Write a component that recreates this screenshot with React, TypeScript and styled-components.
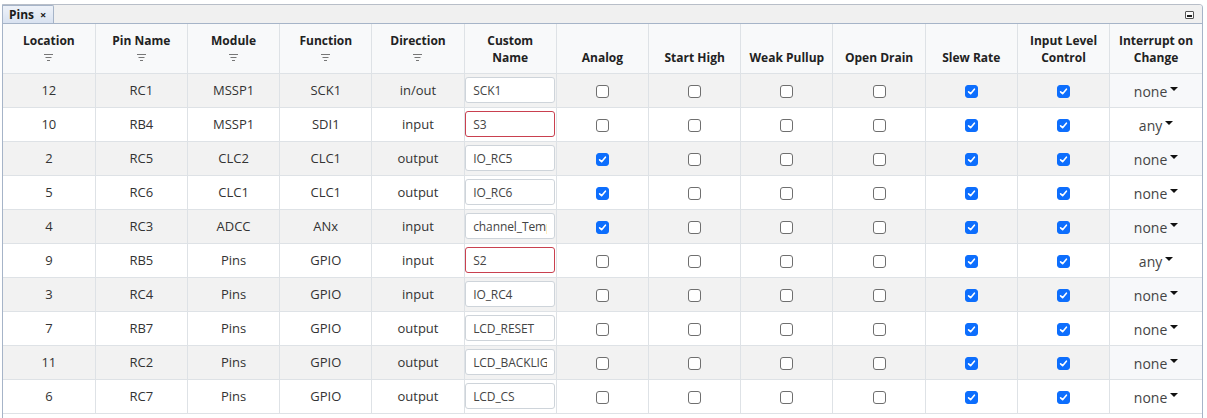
import React from "react";
import styled, { createGlobalStyle } from "styled-components";

const Global = createGlobalStyle`
  html, body { margin: 0; padding: 0; background: #ffffff; }
  body { font-family: "Open Sans", "Noto Sans", sans-serif; color: #333; }
`;

const Page = styled.div`
  padding: 4px 4px 0 2px;
`;

const Panel = styled.div`
  border: 1px solid #a6b4c8;
  border-bottom: none;
  border-top-right-radius: 4px;
  border-top-color: #b8bec8;
  height: 414px;
  box-sizing: border-box;
  overflow: hidden;
  background: #fff;
`;

const TabBar = styled.div`
  height: 18px;
  background: #f0f0f0;
  border-bottom: 1px solid #a6b4c8;
  display: flex;
  align-items: flex-end;
  justify-content: space-between;
`;

const Tab = styled.div`
  height: 17px;
  padding: 0 7px 0 6px;
  display: flex;
  align-items: center;
  gap: 6px;
  background: linear-gradient(#eef2f9, #d9e2f0);
  border: 1px solid #a6b4c8;
  border-bottom: none;
  border-left: none;
  border-top-right-radius: 2px;
  font-size: 12px;
  font-weight: 700;
  color: #1a1a1a;
`;

const Close = styled.span`
  font-size: 11px;
  font-weight: 700;
`;

const MinBtn = styled.div`
  width: 9px;
  height: 8px;
  border: 1px solid #555;
  border-radius: 1px;
  margin: 0 8px 4px 0;
  display: flex;
  align-items: flex-end;
  justify-content: center;
  box-sizing: border-box;
  background: #fafafa;
  &::after {
    content: "";
    width: 5px;
    height: 2px;
    background: #222;
    margin-bottom: 1px;
  }
`;

const Table = styled.table`
  width: 100%;
  border-collapse: collapse;
  table-layout: fixed;
`;

const Th = styled.th`
  height: 49px;
  box-sizing: border-box;
  padding: 0 2px 7px;
  background: #f8f9fa;
  border-right: 1px solid #dee2e6;
  border-bottom: 1px solid #dee2e6;
  font-size: 12px;
  font-weight: 700;
  line-height: 17px;
  color: #222;
  text-align: center;
  vertical-align: bottom;
  &:last-child { border-right: none; }
`;

const HeadInner = styled.div`
  display: flex;
  flex-direction: column;
  align-items: center;
`;

const IconLine = styled.span`
  height: 17px;
  display: flex;
  align-items: center;
  justify-content: center;
`;

const FilterIcon = () => (
  <IconLine>
    <svg width="9" height="7" viewBox="0 0 9 7" aria-hidden>
      <rect x="0" y="0" width="9" height="1" fill="#777" />
      <rect x="1.5" y="3" width="6" height="1" fill="#777" />
      <rect x="3" y="6" width="3" height="1" fill="#777" />
    </svg>
  </IconLine>
);

const Tr = styled.tr<{ $shade: boolean }>`
  background: ${(p) => (p.$shade ? "#f2f2f2" : "#ffffff")};
`;

const Td = styled.td`
  height: 33px;
  padding: 0;
  border-right: 1px solid #dee2e6;
  border-bottom: 1px solid #dee2e6;
  font-size: 13px;
  color: #333;
  text-align: center;
  vertical-align: middle;
`;

const EdgeTd = styled(Td)<{ $shade: boolean }>`
  border-right: none;
  background: ${(p) => (p.$shade ? "#f7f8fa" : "#ffffff")};
  font-size: 14px;
`;

const NameInput = styled.input<{ $invalid: boolean }>`
  display: block;
  width: 90px;
  height: 26px;
  margin: 0 auto;
  box-sizing: border-box;
  padding: 0 7px;
  border: 1px solid ${(p) => (p.$invalid ? "#c9404f" : "#ced4da")};
  border-radius: 3px;
  background: #fff;
  font-family: "Open Sans", "Noto Sans", sans-serif;
  font-size: 12px;
  letter-spacing: -0.1px;
  color: #444;
  outline: none;
`;

const Box = styled.span<{ $on: boolean }>`
  display: inline-flex;
  align-items: center;
  justify-content: center;
  width: 13px;
  height: 13px;
  box-sizing: border-box;
  border-radius: 3px;
  border: 1px solid ${(p) => (p.$on ? "#0d6efd" : "#6f6f6f")};
  background: ${(p) => (p.$on ? "#0d6efd" : "#fff")};
  vertical-align: middle;
`;

const Check = ({ on }: { on: boolean }) => (
  <Box $on={on}>
    {on && (
      <svg width="9" height="9" viewBox="0 0 9 9" aria-hidden>
        <path d="M1.6 4.8 L3.6 6.7 L7.4 2.2" stroke="#fff" strokeWidth="1.6" fill="none" strokeLinecap="round" strokeLinejoin="round" />
      </svg>
    )}
  </Box>
);

const Drop = styled.span`
  display: inline-flex;
  align-items: flex-start;
  gap: 3px;
  color: #444;
  padding-top: 2px;
`;

const Caret = styled.span`
  width: 0;
  height: 0;
  border-left: 4px solid transparent;
  border-right: 4px solid transparent;
  border-top: 4px solid #111;
  margin-top: 5px;
`;

type Row = {
  loc: string; pin: string; mod: string; fn: string; dir: string; name: string;
  invalid?: boolean; analog: boolean; ioc: string;
};

const rows: Row[] = [
  { loc: "12", pin: "RC1", mod: "MSSP1", fn: "SCK1", dir: "in/out", name: "SCK1", analog: false, ioc: "none" },
  { loc: "10", pin: "RB4", mod: "MSSP1", fn: "SDI1", dir: "input", name: "S3", invalid: true, analog: false, ioc: "any" },
  { loc: "2", pin: "RC5", mod: "CLC2", fn: "CLC1", dir: "output", name: "IO_RC5", analog: true, ioc: "none" },
  { loc: "5", pin: "RC6", mod: "CLC1", fn: "CLC1", dir: "output", name: "IO_RC6", analog: true, ioc: "none" },
  { loc: "4", pin: "RC3", mod: "ADCC", fn: "ANx", dir: "input", name: "channel_Temp", analog: true, ioc: "none" },
  { loc: "9", pin: "RB5", mod: "Pins", fn: "GPIO", dir: "input", name: "S2", invalid: true, analog: false, ioc: "any" },
  { loc: "3", pin: "RC4", mod: "Pins", fn: "GPIO", dir: "input", name: "IO_RC4", analog: false, ioc: "none" },
  { loc: "7", pin: "RB7", mod: "Pins", fn: "GPIO", dir: "output", name: "LCD_RESET", analog: false, ioc: "none" },
  { loc: "11", pin: "RC2", mod: "Pins", fn: "GPIO", dir: "output", name: "LCD_BACKLIGHT", analog: false, ioc: "none" },
  { loc: "6", pin: "RC7", mod: "Pins", fn: "GPIO", dir: "output", name: "LCD_CS", analog: false, ioc: "none" },
];

const filtered = ["Location", "Pin Name", "Module", "Function", "Direction"];
const plain: React.ReactNode[] = [
  <>Custom<br />Name</>,
  "Analog", "Start High", "Weak Pullup", "Open Drain", "Slew Rate",
  <>Input Level<br />Control</>,
  <>Interrupt on<br />Change</>,
];

export default function App() {
  return (
    <Page>
      <Global />
      <Panel>
        <TabBar>
          <Tab>
            Pins <Close>×</Close>
          </Tab>
          <MinBtn />
        </TabBar>
        <Table>
          <thead>
            <tr>
              {filtered.map((h) => (
                <Th key={h}>
                  <HeadInner>
                    <span>{h}</span>
                    <FilterIcon />
                  </HeadInner>
                </Th>
              ))}
              {plain.map((h, i) => (
                <Th key={i}>{h}</Th>
              ))}
            </tr>
          </thead>
          <tbody>
            {rows.map((r, i) => {
              const shade = i % 2 === 0;
              return (
                <Tr key={i} $shade={shade}>
                  <Td>{r.loc}</Td>
                  <Td>{r.pin}</Td>
                  <Td>{r.mod}</Td>
                  <Td>{r.fn}</Td>
                  <Td>{r.dir}</Td>
                  <Td>
                    <NameInput $invalid={!!r.invalid} defaultValue={r.name} readOnly />
                  </Td>
                  <Td><Check on={r.analog} /></Td>
                  <Td><Check on={false} /></Td>
                  <Td><Check on={false} /></Td>
                  <Td><Check on={false} /></Td>
                  <Td><Check on={true} /></Td>
                  <Td><Check on={true} /></Td>
                  <EdgeTd $shade={shade}>
                    <Drop>
                      {r.ioc}
                      <Caret />
                    </Drop>
                  </EdgeTd>
                </Tr>
              );
            })}
          </tbody>
        </Table>
      </Panel>
    </Page>
  );
}
